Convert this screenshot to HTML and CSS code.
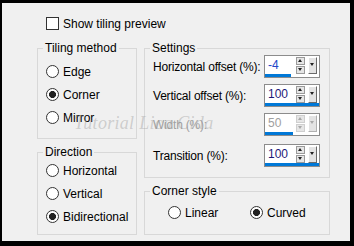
FILE: index.html
```html
<!DOCTYPE html>
<html lang="en">
<head>
    <meta charset="UTF-8">
    <title>Seamless Tiling</title>
    <link rel="stylesheet" href="styles.css">
</head>
<body>

    <div class="win">
        <label class="check"><span class="box"></span>Show tiling preview</label>

        <div class="cols">
            <div class="col">
                <fieldset class="grp tiling">
                    <legend>Tiling method</legend>
                    <label class="radio"><span class="dot"></span>Edge</label>
                    <label class="radio on"><span class="dot"></span>Corner</label>
                    <label class="radio"><span class="dot"></span>Mirror</label>
                </fieldset>
                <fieldset class="grp direction">
                    <legend>Direction</legend>
                    <label class="radio"><span class="dot"></span>Horizontal</label>
                    <label class="radio"><span class="dot"></span>Vertical</label>
                    <label class="radio on"><span class="dot"></span>Bidirectional</label>
                </fieldset>
            </div>

            <div class="col">
                <fieldset class="grp settings">
                    <legend>Settings</legend>
                    <div class="row">
                        <span class="lbl">Horizontal offset (%):</span>
                        <div class="spin">
                            <div class="spin-top">
                                <span class="val blue">-4</span>
                                <span class="arrows"><i class="up"></i><i class="down"></i></span>
                                <i class="drop"></i>
                            </div>
                            <div class="bar" style="width:48%"></div>
                        </div>
                    </div>
                    <div class="row">
                        <span class="lbl">Vertical offset (%):</span>
                        <div class="spin">
                            <div class="spin-top">
                                <span class="val">100</span>
                                <span class="arrows"><i class="up"></i><i class="down"></i></span>
                                <i class="drop"></i>
                            </div>
                            <div class="bar" style="width:100%"></div>
                        </div>
                    </div>
                    <div class="row off">
                        <span class="lbl">Width (%):</span>
                        <div class="spin">
                            <div class="spin-top">
                                <span class="val">50</span>
                                <span class="arrows"><i class="up"></i><i class="down"></i></span>
                                <i class="drop"></i>
                            </div>
                            <div class="bar" style="width:52%"></div>
                        </div>
                    </div>
                    <div class="row">
                        <span class="lbl">Transition (%):</span>
                        <div class="spin">
                            <div class="spin-top">
                                <span class="val">100</span>
                                <span class="arrows"><i class="up"></i><i class="down"></i></span>
                                <i class="drop"></i>
                            </div>
                            <div class="bar" style="width:100%"></div>
                        </div>
                    </div>
                </fieldset>
                <fieldset class="grp corner">
                    <legend>Corner style</legend>
                    <div class="pair">
                        <label class="radio"><span class="dot"></span>Linear</label>
                        <label class="radio on"><span class="dot"></span>Curved</label>
                    </div>
                </fieldset>
            </div>
        </div>

        <div class="mark">Tutorial Lica Cida</div>
    </div>

</body>
</html>
```

FILE: styles.css
```css
html, body {
    margin: 0;
    background: #000;
}
body {
    font-family: "Liberation Sans", Arial, sans-serif;
    font-size: 12px;
    color: #000;
}
.win {
    position: relative;
    margin: 3px 4px 0 2px;
    height: 238px;
    background: #f0f0f0;
    overflow: hidden;
}

/* checkbox + radios */
.check {
    display: flex;
    align-items: center;
    gap: 4px;
    height: 17px;
    padding: 12px 0 0 44px;
}
.box {
    width: 13px;
    height: 13px;
    box-sizing: border-box;
    border: 1px solid #333;
    background: #fff;
}
.radio {
    display: flex;
    align-items: center;
    gap: 4px;
    height: 23px;
}
.dot {
    width: 13px;
    height: 13px;
    box-sizing: border-box;
    border: 1px solid #333;
    border-radius: 50%;
    background: #fff;
}
.radio.on .dot {
    background: radial-gradient(circle, #222 0 3.2px, #fff 3.8px);
}

/* group boxes */
.cols {
    display: flex;
    gap: 7px;
    padding: 9px 0 0 35px;
}
.col {
    display: flex;
    flex-direction: column;
    gap: 6px;
}
.grp {
    margin: 0;
    padding: 0 0 0 8px;
    box-sizing: border-box;
    border: 1px solid #d8d8d8;
    min-width: 0;
}
.grp legend {
    padding: 0 2px;
    margin-left: -3px;
    line-height: 14px;
}
.tiling {
    width: 100px;
    height: 98px;
    padding-top: 5px;
}
.direction {
    width: 100px;
    height: 90px;
    padding-top: 0;
}
.settings {
    width: 186px;
    height: 137px;
    padding-right: 9px;
}
.corner {
    width: 186px;
    height: 51px;
    padding-top: 3px;
}
.pair {
    display: grid;
    grid-template-columns: 82px 82px;
    padding-left: 15px;
}

/* spinner rows */
.row {
    display: flex;
    align-items: center;
    height: 23px;
    margin-bottom: 6px;
}
.row.off {
    margin-bottom: 8px;
    color: #a0a0a0;
}
.lbl {
    white-space: nowrap;
    letter-spacing: -0.2px;
    flex: 1;
}
.spin {
    flex: none;
    width: 56px;
    height: 23px;
    box-sizing: border-box;
    border: 1px solid #8c8c8c;
    background: #fff;
    display: flex;
    flex-direction: column;
}
.spin-top {
    display: flex;
    align-items: center;
    height: 18px;
}
.val {
    flex: 1;
    padding-left: 3px;
    color: #1e1a78;
}
.val.blue {
    color: #2347c8;
}
.off .val {
    color: #a0a0a0;
}
.arrows {
    display: flex;
    flex-direction: column;
    width: 9px;
    margin-right: 3px;
}
.up, .down {
    position: relative;
    height: 8px;
    box-sizing: border-box;
    border: 1px solid #9a9a9a;
    background: #e6e6e6;
}
.down {
    margin-top: 1px;
}
.up::after, .down::after {
    content: "";
    position: absolute;
    left: 1px;
    border-left: 2.5px solid transparent;
    border-right: 2.5px solid transparent;
}
.up::after {
    top: 1px;
    border-bottom: 3px solid #222;
}
.down::after {
    top: 1px;
    border-top: 3px solid #222;
}
.drop {
    position: relative;
    width: 9px;
    height: 17px;
    margin-right: 2px;
    box-sizing: border-box;
    background: #e3e3e3;
    border-top: 1px solid #fff;
    border-left: 1px solid #fff;
    border-right: 1px solid #6a6a6a;
    border-bottom: 1px solid #6a6a6a;
}
.drop::after {
    content: "";
    position: absolute;
    left: 1px;
    top: 5px;
    border-left: 2.5px solid transparent;
    border-right: 2.5px solid transparent;
    border-top: 3px solid #222;
}
.off .up, .off .down {
    border-color: #cfcfcf;
}
.off .up::after { border-bottom-color: #a8a8a8; }
.off .down::after, .off .drop::after { border-top-color: #a8a8a8; }
.off .drop {
    border-right-color: #b0b0b0;
    border-bottom-color: #b0b0b0;
}
.bar {
    height: 3px;
    margin-top: auto;
    background: #0078d7;
}

/* watermark over the dialog */
.mark {
    position: absolute;
    left: 72px;
    top: 110px;
    font-family: "Liberation Serif", serif;
    font-style: italic;
    font-size: 18px;
    letter-spacing: 0.3px;
    color: rgba(150, 150, 150, 0.4);
    pointer-events: none;
}
```
